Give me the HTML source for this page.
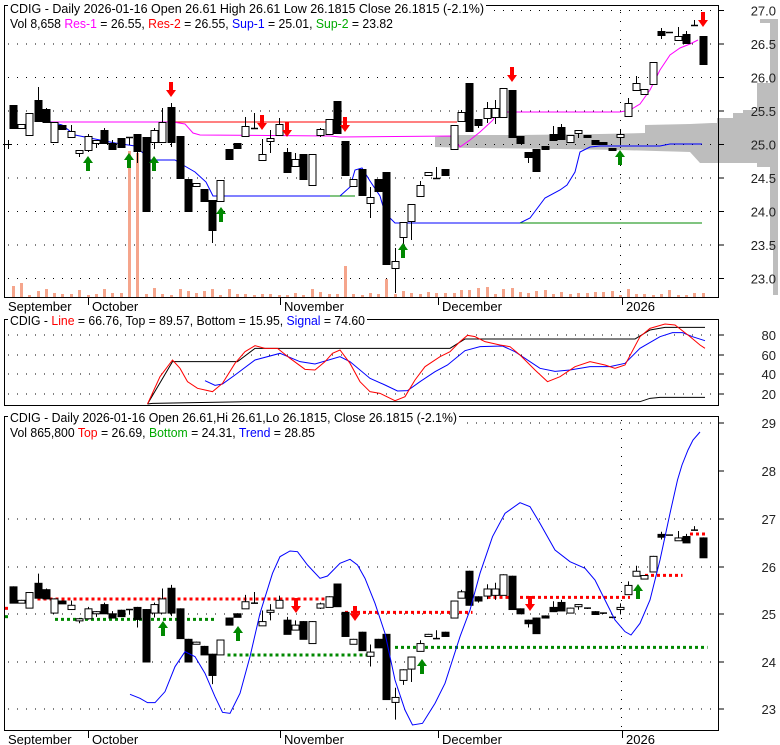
<!DOCTYPE html>
<html><head><meta charset="utf-8"><style>
html,body{margin:0;padding:0;background:#fff;}
svg{display:block;font-family:"Liberation Sans",sans-serif;}
</style></head><body>
<svg id="s" width="780" height="745" xmlns="http://www.w3.org/2000/svg"></svg>
<script>
var S=document.getElementById('s');var h='';
function L(x1,y1,x2,y2,c,w,d){h+='<line x1="'+x1+'" y1="'+y1+'" x2="'+x2+'" y2="'+y2+'" stroke="'+c+'" stroke-width="'+(w||1)+'"'+(d?' stroke-dasharray="'+d+'"':'')+'/>';}
function R(x,y,w,hh,f,st){h+='<rect x="'+x+'" y="'+y+'" width="'+w+'" height="'+hh+'" fill="'+f+'"'+(st?' stroke="'+st+'" stroke-width="1"':'')+'/>';}
function P(pts,c,w,d){h+='<polyline fill="none" stroke="'+c+'" stroke-width="'+(w||1)+'"'+(d?' stroke-dasharray="'+d+'"':'')+' points="'+pts.map(function(p){return p[0]+','+p[1]}).join(' ')+'"/>';}
function T(x,y,s,extra){h+='<text x="'+x+'" y="'+y+'" font-size="13" '+(extra||'')+'>'+s+'</text>';}
function up(x,y,c){h+='<polygon fill="'+c+'" points="'+(x-5)+','+(y)+' '+x+','+(y-7)+' '+(x+5)+','+y+' '+(x+2)+','+y+' '+(x+2)+','+(y+8)+' '+(x-2)+','+(y+8)+' '+(x-2)+','+y+'"/>';}
function dn(x,y,c){h+='<polygon fill="'+c+'" points="'+(x-2)+','+(y-8)+' '+(x+2)+','+(y-8)+' '+(x+2)+','+y+' '+(x+5)+','+y+' '+x+','+(y+7)+' '+(x-5)+','+y+' '+(x-2)+','+y+'"/>';}
var C=[[13,105,128,105,129,1],[21,124,128,124,128,0],[29,113,135,113,135,0],[38,100,121,87,121,1],[46,109,122,108,122,1],[54,122,142,122,142,0],[62,125,129,125,129,1],[71,131,137,125,138,0],[79,150,153,150,157,0],[88,136,150,134,152,0],[96,140,143,140,148,0],[104,130,143,128,143,1],[112,143,149,140,149,1],[121,138,147,138,147,1],[129,137,138,137,145,1],[137,134,151,134,163,1],[146,137,211,137,211,1],[154,130,142,128,149,0],[162,122,142,108,142,0],[171,107,142,103,147,1],[180,136,178,136,179,1],[188,179,211,179,211,1],[196,183,186,183,186,0],[204,189,201,189,201,1],[212,200,230,200,243,1],[220,180,201,180,201,0],[229,149,159,149,159,1],[237,143,148,143,148,1],[245,126,136,117,136,0],[254,128,128,113,128,1],[262,154,160,139,160,0],[270,138,141,130,153,0],[279,124,135,118,135,0],[287,152,172,148,172,1],[295,159,166,153,166,0],[303,154,179,154,179,1],[312,154,185,154,185,0],[320,129,135,128,137,0],[329,119,134,119,134,0],[337,101,133,101,133,1],[345,141,175,141,175,1],[353,179,186,179,186,0],[362,169,195,169,195,1],[370,197,203,187,218,0],[378,179,191,179,191,1],[386,172,264,172,264,1],[395,261,268,248,293,0],[403,222,237,222,244,0],[411,204,221,204,240,0],[420,185,196,181,196,0],[428,172,175,172,175,0],[436,178,178,167,178,1],[445,169,175,169,175,1],[454,125,149,125,149,0],[461,112,121,110,121,0],[469,83,131,83,131,1],[478,119,125,119,128,1],[487,108,118,102,123,0],[495,108,117,100,124,0],[503,88,117,88,117,0],[512,90,137,90,137,1],[520,136,143,136,143,1],[528,152,157,152,163,1],[536,149,171,149,171,1],[545,146,149,146,150,1],[553,134,140,126,140,1],[561,127,139,124,139,1],[570,135,142,135,142,0],[578,130,133,130,138,0],[587,135,137,135,137,1],[595,140,144,140,144,1],[603,142,144,142,144,1],[612,148,150,148,150,1],[620,134,137,129,144,0],[628,103,116,98,116,0],[636,83,90,76,90,0],[644,89,94,89,94,0],[653,62,84,62,84,0],[661,31,35,28,39,1],[669,32,32,32,32,1],[678,36,40,27,40,0],[686,34,43,31,43,1],[694,25,25,20,25,1],[703,36,64,36,64,1]];
var V=[12,15,3,7,9,5,4,4,8,3,4,9,5,5,147,145,4,10,4,3,9,7,5,7,9,3,9,4,4,3,4,4,3,3,5,3,9,6,4,4,32,4,3,5,4,19,4,7,5,4,6,5,5,5,8,8,10,11,4,9,10,6,5,7,8,4,6,4,5,5,6,6,7,3,9,4,4,3,4,8,3,3,5,5,8,4,9];
var g1='#bdbdbd';
h+='<polygon fill="'+g1+'" points="435,137 447,136 460,135 520,135 600,134 645,133 645,125 690,124 712,123 719,123 719,163 700,163 690,152 620,150 560,149 470,148 435,147"/>';
h+='<polygon fill="'+g1+'" points="778,19 760,19 760,23 770,23 770,83 757,83 757,110 743,110 743,113 733,113 733,118 717,118 717,123 712,123 712,163 757,163 757,167 770,167 770,250 773,250 773,295 778,295"/>';
function dots(y,x1,x2){L(x1,y,x2,y,'#000',1,'1 8');}
for(var i=0;i<9;i++){dots(10.5+i*33.5,8,719);}
for(var y=12;y<298;y+=9)R(620,y,1,1,'#000');
for(var y=420;y<731;y+=9)R(621,y,1,1,'#000');
[335,355,374,394].forEach(function(y){dots(y,8,719)});
[423,519,567,614,662,709].forEach(function(y){dots(y,8,719)});
C.forEach(function(c,i){var v=V[i]||4;R(c[0]-1,298-v,3,v,'#f5a58c');});
P([[56,122],[457,122]],'#f00');
P([[50,122],[173,122],[185,124],[193,133],[200,135],[330,136],[340,137],[453,136],[460,147],[470,140],[480,132],[493,120],[497,112],[620,112],[630,110],[640,104],[650,90],[660,70],[670,55],[680,48],[690,44],[698,40]],'#f0f');
P([[50,122],[62,125],[75,135],[90,138],[100,140],[115,143],[135,146],[143,153],[150,160],[175,160],[183,165],[195,172],[206,182],[213,196],[330,196]],'#00f');
P([[330,196],[355,196]],'#080');
P([[340,196],[350,187],[355,170],[362,168],[370,181],[380,196],[385,213],[395,223],[520,223],[530,218],[545,198],[560,190],[567,185],[575,172],[580,152],[590,147],[600,146],[660,146],[670,144],[702,144]],'#00f');
P([[520,223],[702,223]],'#080');
function cand(c,map){var x=c[0];var a=map(c[1]),b=map(c[2]),t=map(c[3]),u=map(c[4]);
 L(x+0.5,t,x+0.5,u,'#000');
 if(Math.abs(b-a)<1.5){L(x-3,a+0.5,x+4,a+0.5,'#000',1.5);}
 else R(x-3,a+0.5,7,b-a,c[5]?'#000':'#fff','#000');}
C.forEach(function(c){cand(c,function(y){return y;});});
[[171,90],[262,123],[287,130],[345,125],[512,75],[703,20]].forEach(function(p){dn(p[0],p[1],'#f00')});
[[88,163],[129,160],[154,163],[221,214],[403,250],[620,157]].forEach(function(p){up(p[0],p[1],'#080')});
L(3,144.5,12,144.5,'#000');L(8.5,140,8.5,149,'#000');
R(4.5,5.5,714,292,'none','#000');R(4.5,319.5,714,86,'none','#000');R(4.5,416.5,714,314,'none','#000');
function m2(a){return a.map(function(p){return [p[0]/2,280+p[1]/3]})}
P(m2([[295,372],[345,245],[475,245],[510,205],[900,205],[930,177],[1270,177],[1300,150],[1330,142],[1410,142]]),'#000');
P(m2([[295,372],[305,370],[500,365],[1280,365],[1300,355],[1320,352],[1410,352]]),'#000');
P(m2([[410,302],[430,316],[445,312],[470,285],[510,240],[560,220],[600,245],[630,252],[680,230],[700,245],[740,295],[770,315],[795,333],[815,332],[840,305],[870,275],[895,255],[930,212],[960,200],[1005,198],[1030,215],[1080,265],[1110,274],[1140,270],[1180,260],[1220,260],[1250,250],[1280,205],[1320,170],[1345,158],[1365,158],[1385,170],[1410,182]]),'#00f');
P(m2([[295,372],[320,290],[345,240],[360,265],[375,305],[395,325],[425,335],[445,310],[470,250],[490,215],[510,197],[530,205],[555,205],[580,235],[610,268],[630,270],[650,245],[665,220],[680,210],[700,250],[720,305],[740,335],[760,340],[790,362],[810,350],[830,300],[850,260],[880,230],[900,215],[920,185],[935,166],[950,170],[970,185],[1000,195],[1020,200],[1040,225],[1070,270],[1095,305],[1120,290],[1150,260],[1180,245],[1210,255],[1230,265],[1250,255],[1280,170],[1300,145],[1330,132],[1350,135],[1380,170],[1400,195],[1410,205]]),'#f00');
function m3(a){return a.map(function(p){return [p[0]/2,480+p[1]/3]})}
var rd='#f00',gd='#080';
[[[10,385],[20,385]],[[75,357],[340,357]],[[355,357],[650,357]],[[690,397],[945,397]],[[975,352],[1020,352]],[[1040,352],[1260,352]],[[1290,286],[1365,286]],[[1380,162],[1415,162]]].forEach(function(s){P(m3(s),rd,3,'3 3')});
[[[10,410],[20,410]],[[110,418],[430,418]],[[455,525],[735,525]],[[790,502],[1415,502]]].forEach(function(s){P(m3(s),gd,3,'3 3')});
C.forEach(function(c){cand(c,function(y){return 614-(144-y)*47.5/67;});});
P(m3([[260,643],[280,655],[295,668],[310,668],[330,635],[350,560],[370,515],[390,530],[410,580],[430,650],[445,697],[460,700],[480,640],[500,530],[520,400],[545,280],[560,230],[580,213],[595,215],[615,255],[640,295],[655,288],[680,250],[700,238],[715,255],[730,295],[750,370],[770,460],[790,600],[810,690],[825,735],[845,730],[870,670],[890,610],[905,540],[920,470],[940,390],[960,280],[985,170],[1010,100],[1040,68],[1060,80],[1080,130],[1110,210],[1140,245],[1170,265],[1190,300],[1210,360],[1230,420],[1250,455],[1262,465],[1280,430],[1300,360],[1320,240],[1340,100],[1355,0]]).concat([[682,465],[688,450],[693,440],[700,432]]),'#00f');
[[296,606],[355,614],[530,604]].forEach(function(p){dn(p[0],p[1],'#f00')});
[[163,628],[238,633],[422,666],[638,591]].forEach(function(p){up(p[0],p[1],'#080')});
var ty=['27.0','26.5','26.0','25.5','25.0','24.5','24.0','23.5','23.0'];
ty.forEach(function(s,i){var y=10.5+i*33.5;L(719,y,724,y,'#000');T(776,y+5,s,'text-anchor="end" fill="#222"');});
[['80',335],['60',355],['40',374],['20',394]].forEach(function(a){L(719,a[1],724,a[1],'#000');T(776,a[1]+5,a[0],'text-anchor="end" fill="#222"');});
[['29',423],['28',471],['27',519],['26',567],['25',614],['24',662],['23',709]].forEach(function(a){L(719,a[1],724,a[1],'#000');T(776,a[1]+5,a[0],'text-anchor="end" fill="#222"');});
[[298,306],[731,739]].forEach(function(b){
 [[88,'October'],[280,'November'],[438,'December'],[622,'2026']].forEach(function(m){L(m[0]+0.5,b[0],m[0]+0.5,b[0]+7,'#000');T(m[0]+4,b[1]+5,m[1],'fill="#000"');});
 T(8,b[1]+5,'September','fill="#000"');});
function hdr(x,y,w,content){R(x-2,y-11,w+4,14,'#fff');h+='<text x="'+x+'" y="'+y+'" font-size="13" textLength="'+w+'" lengthAdjust="spacingAndGlyphs">'+content+'</text>';}
hdr(10,13,474,'CDIG - Daily 2026-01-16 Open 26.61  High 26.61  Low 26.1815  Close 26.1815 (-2.1%)');
h+='<text x="10" y="28" font-size="13" textLength="383" lengthAdjust="spacingAndGlyphs">Vol 8,658 <tspan fill="#f0f">Res-1</tspan> = 26.55, <tspan fill="#f00">Res-2</tspan> = 26.55, <tspan fill="#00f">Sup-1</tspan> = 25.01, <tspan fill="#0a0">Sup-2</tspan> = 23.82</text>';
hdr(10,325,355,'CDIG - <tspan fill="#f00">Line</tspan> = 66.76, Top = 89.57, Bottom = 15.95, <tspan fill="#00f">Signal</tspan> = 74.60');
hdr(10,422,447,'CDIG - Daily 2026-01-16 Open 26.61,Hi 26.61,Lo 26.1815, Close 26.1815 (-2.1%)');
h+='<text x="10" y="437" font-size="13" textLength="305" lengthAdjust="spacingAndGlyphs">Vol 865,800 <tspan fill="#f00">Top</tspan> = 26.69, <tspan fill="#0a0">Bottom</tspan> = 24.31, <tspan fill="#00f">Trend</tspan> = 28.85</text>';
S.innerHTML=h;
</script>
</body></html>
